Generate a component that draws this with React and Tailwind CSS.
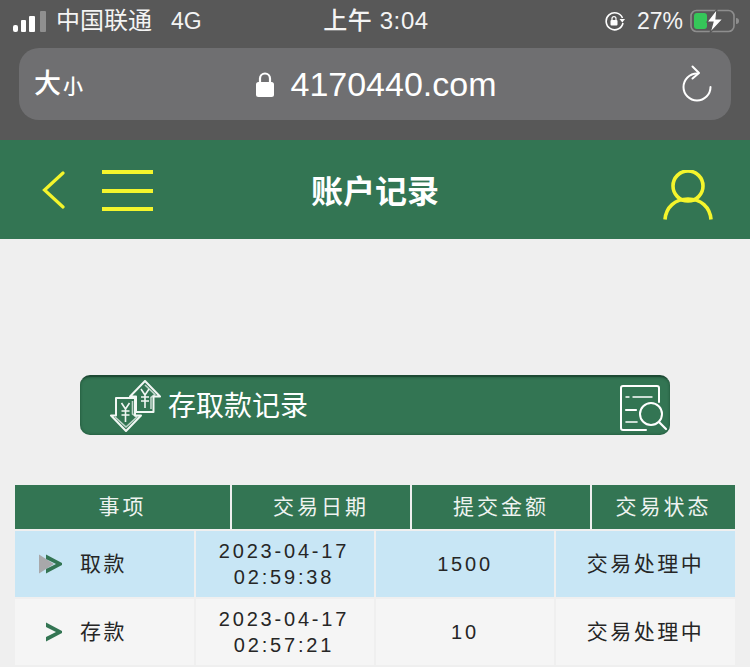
const CJK = '"Liberation Sans","Noto Sans CJK SC",sans-serif';

function Signal() {
  return (
    <div className="flex items-end gap-[3px] h-[21px]">
      <div className="w-[5px] h-[7px] rounded-[2px] bg-white" />
      <div className="w-[5px] h-[12px] rounded-[1px] bg-white" />
      <div className="w-[6px] h-[16px] rounded-[1px] bg-white" />
      <div className="w-[6px] h-[21px] ml-[2px] rounded-[1px] bg-[#8f8f8f]" />
    </div>
  );
}

function StatusBar() {
  return (
    <div className="h-[42px] mb-[6px] grid grid-cols-[1fr_auto_1fr] items-center text-[#f4f4f4] pl-[13px] pr-[11px]">
      <div className="flex items-center">
        <Signal />
        <span className="ml-[10px] text-[24px]">中国联通</span>
        <span className="ml-[19px] text-[23px]">4G</span>
      </div>
      <span className="text-[24px] font-medium tracking-[0.6px]">上午 3:04</span>
      <div className="flex items-center justify-end">
        <svg width="22" height="20" viewBox="0 0 22 20" fill="none" stroke="#fff" strokeWidth="1.6">
          <path d="M19 12 A8.5 8.5 0 1 1 18.5 7" />
          <path d="M15.5 8h5.5l-2.7 3.4z" fill="#fff" stroke="none" />
          <rect x="6.5" y="9" width="7" height="5.5" rx="1" fill="#fff" stroke="none" />
          <path d="M8 9V7.6a2 2 0 0 1 4 0V9" strokeWidth="1.2" />
        </svg>
        <span className="ml-[11px] text-[23px]">27%</span>
        <svg className="ml-[7px]" width="49" height="24" viewBox="0 0 49 24" fill="none">
          <rect x="1" y="1.5" width="43" height="21" rx="5.5" stroke="#8e8e8e" strokeWidth="1.6" />
          <path d="M46 9 a3 3 0 0 1 0 6z" fill="#8e8e8e" />
          <rect x="4" y="4" width="13" height="16" rx="3" fill="#35c759" />
          <path d="M27 0 L17 13h6l-3 11 L33 10h-7z" fill="#fff" stroke="#585858" strokeWidth="1.2" />
        </svg>
      </div>
    </div>
  );
}

function UrlBar() {
  return (
    <div className="mx-[19px] h-[72px] rounded-[20px] bg-[#6f6f71] grid grid-cols-[1fr_auto_1fr] items-center pl-[15px] pr-[19px] text-white">
      <div className="flex items-center">
        <span className="text-[27px] font-medium leading-none">大</span>
        <span className="text-[20px] font-medium leading-none mt-[5px] ml-[2px]">小</span>
      </div>
      <div className="flex items-center gap-[16px] mr-[-7px]">
        <svg width="18" height="26" viewBox="0 0 18 26" fill="none">
          <path d="M4 12V7.5a5 5 0 0 1 10 0V12" stroke="#fff" strokeWidth="2.2" />
          <rect x="0" y="11" width="18" height="15" rx="2.5" fill="#fff" />
        </svg>
        <span className="text-[34px] leading-none">4170440.com</span>
      </div>
      <div className="flex justify-end">
        <svg width="30" height="38" viewBox="0 0 30 38" fill="none" stroke="#fff" strokeWidth="2" strokeLinecap="round" strokeLinejoin="round">
          <path d="M15 8.5 A13.5 13.5 0 1 0 28.5 22" />
          <path d="M10.5 1.5 L17 8 L10.5 13.5" />
        </svg>
      </div>
    </div>
  );
}

function Header() {
  return (
    <div className="h-[99px] bg-[#337553] grid grid-cols-[1fr_auto_1fr] items-center px-[42px]">
      <div className="flex items-center">
        <svg width="24" height="38" viewBox="0 0 24 38" fill="none" stroke="#f4f52c" strokeWidth="3.2" strokeLinecap="round">
          <path d="M21 2 L2.5 19 L21 36" />
        </svg>
        <div className="ml-[36px] mt-[2px] w-[51px] h-[41px] flex flex-col justify-between">
          <div className="h-[4px] bg-[#f4f52c]" />
          <div className="h-[4px] bg-[#f4f52c]" />
          <div className="h-[4px] bg-[#f4f52c]" />
        </div>
      </div>
      <div className="text-white text-[32px] font-bold leading-none mt-[4px]">账户记录</div>
      <div className="flex justify-end mt-[11px] mr-[-5px]">
        <svg width="50" height="50" viewBox="0 0 50 50" fill="none" stroke="#f4f52c" strokeWidth="3.6">
          <circle cx="25" cy="16" r="15" />
          <path d="M2 49.5 C3 37 12 29 25 29 C38 29 47 37 48 49.5" />
        </svg>
      </div>
    </div>
  );
}

function YenArrows() {
  return (
    <svg width="52" height="52" viewBox="0 0 52 52" fill="none" stroke="#f2f7f4" strokeWidth="1.6" strokeLinejoin="round">
      <path d="M35 1 L50 16.5 L43.5 16.5 L43.5 32 L26 32 L26 16.5 L20 16.5 Z" strokeWidth="2" />
      <path d="M35 5 L45 14.5 L41 17.5 L41 29" opacity=".75" />
      <path d="M31 9 L35 15 L39 9 M31 17 H39 M31 21 H39 M35 15 V28" strokeWidth="1.6" />
      <path d="M16 51 L1 35.5 L6 35.5 L6 18 L25 18 L25 35.5 L31 35.5 Z" fill="#337553" strokeWidth="2" />
      <path d="M5 37 L16 47 L27 37 L22.5 34 L22.5 21" opacity=".75" />
      <path d="M11.5 23 L15.5 29 L19.5 23 M11.5 31 H19.5 M11.5 35 H19.5 M15.5 29 V42" strokeWidth="1.6" />
    </svg>
  );
}

function SearchDoc() {
  return (
    <svg className="mt-[3px]" width="48" height="46" viewBox="0 0 48 46" fill="none" stroke="#fff" strokeWidth="2" strokeLinecap="round">
      <path d="M39 17 V3 a2 2 0 0 0 -2 -2 H3 a2 2 0 0 0 -2 2 V43 a2 2 0 0 0 2 2 H26" />
      <path d="M6 12 H9 M13 12 H32" strokeWidth="1.4" />
      <path d="M6 25 H16" strokeWidth="2.2" />
      <path d="M6 37 H17" strokeWidth="1.6" />
      <circle cx="31" cy="29" r="11" />
      <path d="M39 37 L46 44" strokeWidth="2.2" />
    </svg>
  );
}

function RecordBar() {
  return (
    <div className="mt-[136px] mx-[80px] h-[60px] rounded-[10px] bg-[#337553] border-t-[2px] border-[#1d4a34] flex items-center pl-[30px] pr-[2px] text-white shadow-[inset_0_0_3px_rgba(0,40,20,0.5)]">
      <YenArrows />
      <span className="ml-[6px] mt-[1px] text-[28px] flex-1">存取款记录</span>
      <SearchDoc />
    </div>
  );
}

function HeadCell({ children }) {
  return (
    <div className="bg-[#337553] text-[#eef3f0] text-[21px] tracking-[3px] flex items-center justify-center">
      {children}
    </div>
  );
}

function Arrow({ active }) {
  return (
    <svg width="23" height="22" viewBox="0 0 23 22">
      {active && <path d="M0 1.5 L15 11 L0 20.5 Z" fill="#a8a8aa" />}
      <path d="M7 1.5 L23 10 L23 12 L7 20.5 L7 16 L17 11 L7 6 Z" fill="#337553" />
    </svg>
  );
}

function Row({ bg, active, label, date, time, amount }) {
  const cell = `${bg} flex items-center justify-center text-[#262626]`;
  return (
    <div className="grid grid-cols-[179px_178px_178px_179px] gap-x-[2px] mt-[2px] h-[66px]">
      <div className={`${bg} flex items-center pl-[24px] gap-[18px] text-[#262626] text-[21px] tracking-[2.5px]`}>
        <Arrow active={active} />
        <span>{label}</span>
      </div>
      <div className={`${cell} flex-col pr-[2px] text-[20px] tracking-[2.8px] leading-[26px]`}>
        <span>{date}</span>
        <span>{time}</span>
      </div>
      <div className={`${cell} text-[20px] tracking-[2.8px]`}>{amount}</div>
      <div className={`${cell} text-[21px] tracking-[2.5px]`}>交易处理中</div>
    </div>
  );
}

function Table() {
  return (
    <div className="mt-[50px] mx-[15px]">
      <div className="grid grid-cols-[215px_178px_178px_143px] gap-x-[2px] h-[44px]">
        <HeadCell>事项</HeadCell>
        <HeadCell>交易日期</HeadCell>
        <HeadCell>提交金额</HeadCell>
        <HeadCell>交易状态</HeadCell>
      </div>
      <Row bg="bg-[#c8e6f5]" active label="取款" date="2023-04-17" time="02:59:38" amount="1500" />
      <Row bg="bg-[#f5f5f5]" label="存款" date="2023-04-17" time="02:57:21" amount="10" />
    </div>
  );
}

export default function App() {
  return (
    <div className="h-[667px] w-[750px] overflow-hidden bg-[#efefef]" style={{ fontFamily: CJK }}>
      <div className="h-[140px] bg-[#585858]">
        <StatusBar />
        <UrlBar />
      </div>
      <Header />
      <RecordBar />
      <Table />
    </div>
  );
}
